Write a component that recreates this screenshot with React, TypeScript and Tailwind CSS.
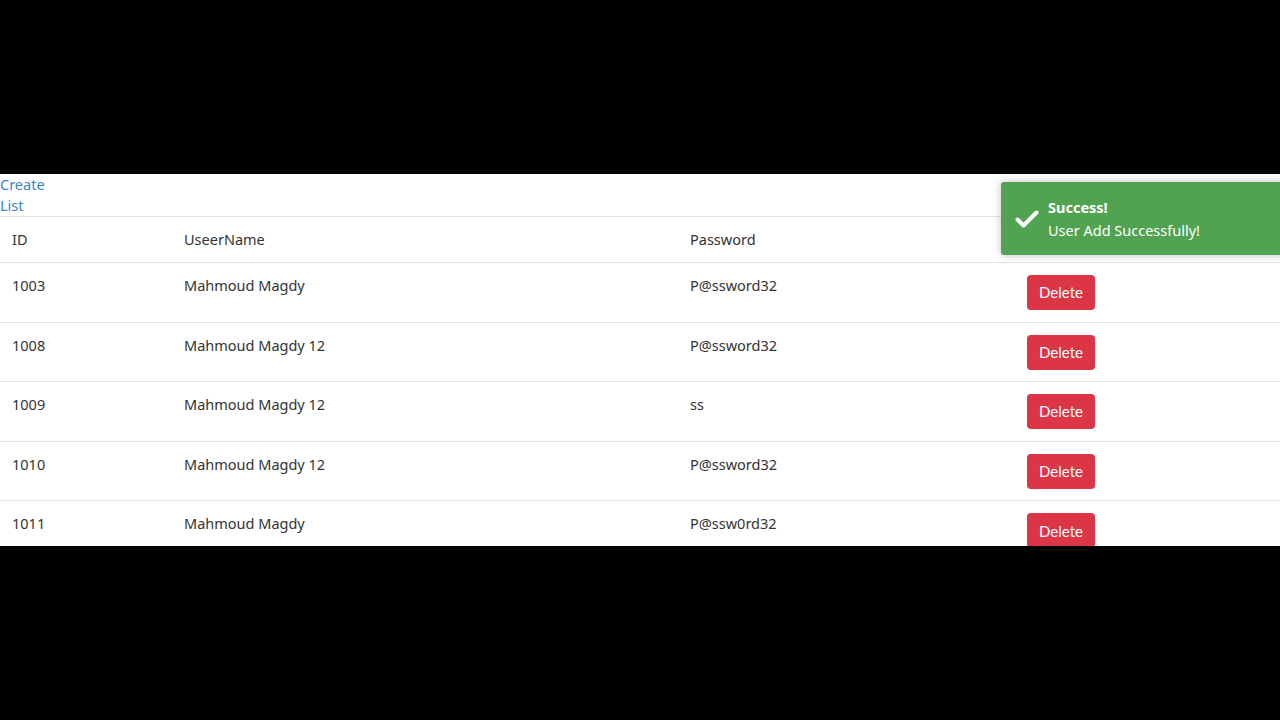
const rows = [
  { id: 1003, name: 'Mahmoud Magdy', password: 'P@ssword32' },
  { id: 1008, name: 'Mahmoud Magdy 12', password: 'P@ssword32' },
  { id: 1009, name: 'Mahmoud Magdy 12', password: 'ss' },
  { id: 1010, name: 'Mahmoud Magdy 12', password: 'P@ssword32' },
  { id: 1011, name: 'Mahmoud Magdy', password: 'P@ssw0rd32' },
]

function CheckIcon() {
  return (
    <svg width="24" height="18" viewBox="0 0 24 18" fill="none">
      <path d="M2.5 9.5l6 6L21.5 2.5" stroke="white" strokeWidth="4" strokeLinecap="round" strokeLinejoin="round" />
    </svg>
  )
}

function Toast() {
  return (
    <div className="absolute left-[1001px] top-[8px] flex h-[73px] w-[300px] items-center rounded-[3px] bg-[#51a351] pl-[14px] text-white shadow-[0_0_8px_rgba(0,0,0,0.25)]">
      <CheckIcon />
      <div className="ml-[9px] text-[14.5px] leading-[23px]">
        <div className="font-bold">Success!</div>
        <div>User Add Successfully!</div>
      </div>
    </div>
  )
}

export default function App() {
  return (
    <div className="flex h-[720px] w-[1280px] flex-col justify-center bg-black font-['Noto_Sans',sans-serif]">
      <div className="relative h-[372px] overflow-hidden bg-white">
        <div className="flex flex-col text-[14.5px] leading-[21px] text-[#3a86c6]">
          <a href="#" className="w-fit">Create</a>
          <a href="#" className="w-fit">List</a>
        </div>
        <table className="w-full border-collapse text-left text-[14.5px] text-[#333]">
          <thead>
            <tr className="h-[46px] border-t border-b border-[#dee2e6]">
              <th className="w-[172px] px-3 font-normal">ID</th>
              <th className="w-[506px] px-3 font-normal">UseerName</th>
              <th className="w-[337px] px-3 font-normal">Password</th>
              <th className="px-3 font-normal"></th>
            </tr>
          </thead>
          <tbody>
            {rows.map((r) => (
              <tr key={r.id} className="h-[59.6px] border-b border-[#dee2e6] align-top">
                <td className="px-3 pt-[10px] leading-[24px]">{r.id}</td>
                <td className="px-3 pt-[10px] leading-[24px]">{r.name}</td>
                <td className="px-3 pt-[10px] leading-[24px]">{r.password}</td>
                <td className="px-3 pt-[12px]">
                  <button className="h-[35px] w-[68px] rounded-[4px] bg-[#dc3545] font-['Lato',sans-serif] text-[15px] text-white">
                    Delete
                  </button>
                </td>
              </tr>
            ))}
          </tbody>
        </table>
        <Toast />
      </div>
    </div>
  )
}
